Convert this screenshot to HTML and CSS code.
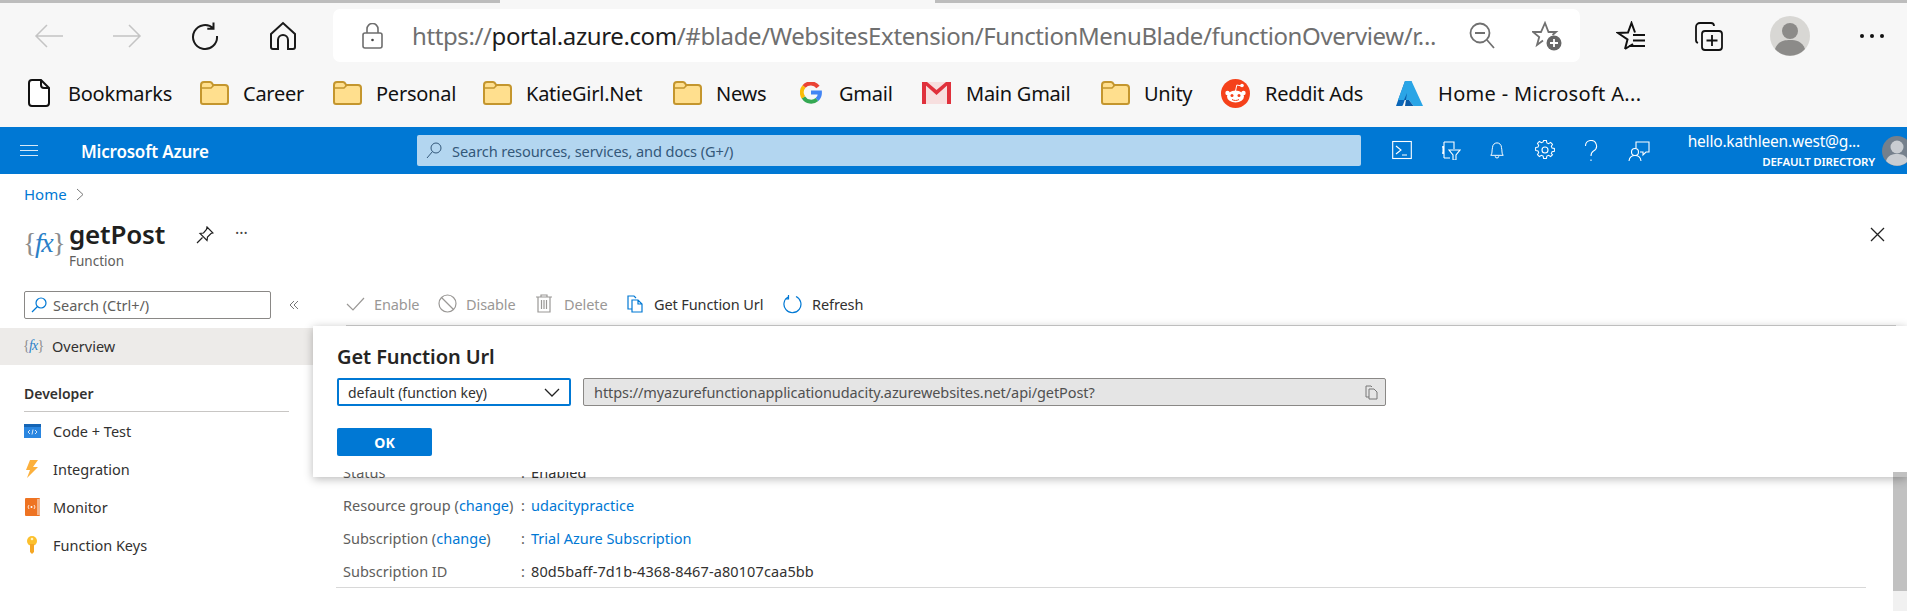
FILE: index.html
```html
<!DOCTYPE html>
<html lang="en">
<head>
<meta charset="utf-8">
<title>getPost - Microsoft Azure</title>
<link rel="stylesheet" href="styles.css">
</head>
<body>
<div class="topstrip"><span class="strip-a"></span><span class="strip-b"></span></div>
<div class="toolbar">
  <div class="navslot"><svg width="30" height="26" viewBox="0 0 30 26" class="ic-light"><path d="M29 13H2M13 2 2 13l11 11"/></svg></div>
  <div class="navslot"><svg width="30" height="26" viewBox="0 0 30 26" class="ic-light"><path d="M1 13h27M17 2l11 11-11 11"/></svg></div>
  <div class="navslot"><svg width="30" height="30" viewBox="0 0 30 30" class="ic-dark"><path d="M23.5 7.5A12 12 0 1 0 27 15M23.5 1.5v6.2h-6.2"/></svg></div>
  <div class="navslot"><svg width="28" height="30" viewBox="0 0 28 30" class="ic-dark"><path d="M2 13 14 2l12 11v13a2 2 0 0 1-2 2h-5V19a5 5 0 0 0-10 0v9H4a2 2 0 0 1-2-2z"/></svg></div>
  <div class="urlbar">
    <svg class="lock" width="21" height="26" viewBox="0 0 21 26"><path d="M5 10V6a5.500 5.500 0 0 1 11 0v4M3 10h15a2 2 0 0 1 2 2v11a2 2 0 0 1-2 2H3a2 2 0 0 1-2-2V12a2 2 0 0 1 2-2z"/><circle cx="10.500" cy="17" r="1.300" class="lock-dot"/></svg>
    <div class="url"><span class="url-dim">https://</span>portal.azure.com<span class="url-dim">/#blade/WebsitesExtension/FunctionMenuBlade/functionOverview/r...</span></div>
    <svg class="zoomic" width="26" height="28" viewBox="0 0 26 28"><circle cx="11" cy="11" r="9.500"/><path d="M6 11h10M18 18l7 8"/></svg>
    <svg class="starplus" width="30" height="30" viewBox="0 0 30 30"><path d="M11 19.500 5 24l2.200-8L1 11h8l4-9 3.500 9H24l-3.500 3"/><circle cx="22" cy="22" r="7.500" class="plus-bg"/><path d="M22 18v8M18 22h8" class="plus-mark"/></svg>
  </div>
  <svg class="favs" width="30" height="30" viewBox="0 0 30 30"><path d="M9 28l2.500-9.500L2 12l10-.5L15.500 2l3.500 9.500M17 14h12M17 19.500h12M13 25h16M9 28l8-5"/></svg>
  <svg class="colls" width="29" height="30" viewBox="0 0 29 30"><path d="M4 22a3 3 0 0 1-2-3V6a4 4 0 0 1 4-4h11a3 3 0 0 1 3 3"/><rect x="8" y="10" width="20" height="19" rx="3"/><path d="M18 14v11M12.500 19.500h11"/></svg>
  <svg class="avatar" width="40" height="40" viewBox="0 0 40 40"><circle cx="20" cy="20" r="20"/><circle cx="20" cy="15" r="8"/><path d="M5 33c3-8 9-9 15-9s12 1 15 9a20 20 0 0 1-30 0z"/></svg>
  <div class="dots"><i></i><i></i><i></i></div>
</div>
<div class="bookmarks">
  <div class="bm"><svg class="i-doc" width="22" height="28" viewBox="0 0 22 28"><path d="M4 1h9l8 8v15a3 3 0 0 1-3 3H4a3 3 0 0 1-3-3V4a3 3 0 0 1 3-3zM13 1v5a3 3 0 0 0 3 3h5" fill="#fff" stroke="#111" stroke-width="2"/></svg><span>Bookmarks</span></div>
  <div class="bm"><svg class="i-folder" width="29" height="26" viewBox="0 0 29 26"><use href="#folder"/></svg><span>Career</span></div>
  <div class="bm"><svg class="i-folder" width="29" height="26" viewBox="0 0 29 26"><use href="#folder"/></svg><span>Personal</span></div>
  <div class="bm"><svg class="i-folder" width="29" height="26" viewBox="0 0 29 26"><use href="#folder"/></svg><span>KatieGirl.Net</span></div>
  <div class="bm"><svg class="i-folder" width="29" height="26" viewBox="0 0 29 26"><use href="#folder"/></svg><span>News</span></div>
  <div class="bm"><svg class="i-g" width="22" height="22" viewBox="0 0 22 22"><g fill="none" stroke-width="4"><path d="M18 5a9 9 0 0 0-14-.5" stroke="#ea4335"/><path d="M4 4.500a9 9 0 0 0-.5 11" stroke="#fbbc05"/><path d="M3.500 15.500a9 9 0 0 0 13.500 2" stroke="#34a853"/><path d="M17 17.500a9 9 0 0 0 2.900-7H11" stroke="#4285f4"/></g></svg><span>Gmail</span></div>
  <div class="bm"><svg class="i-m" width="29" height="24" viewBox="0 0 29 24"><rect x="0" y="1" width="29" height="22" fill="#f7dfdf"/><path d="M0 1h4v22H0zM25 1h4v22h-4z" fill="#e0313c"/><path d="M0 1h5l9.500 8L24 1h5L14.500 14z" fill="#e0313c"/></svg><span>Main Gmail</span></div>
  <div class="bm"><svg class="i-folder" width="29" height="26" viewBox="0 0 29 26"><use href="#folder"/></svg><span>Unity</span></div>
  <div class="bm"><svg class="i-m" width="29" height="29" viewBox="0 0 29 29"><circle cx="14.500" cy="14.500" r="14.500" fill="#f5411a"/><ellipse cx="14.500" cy="17.500" rx="8.500" ry="6" fill="#fff"/><circle cx="6.500" cy="14" r="2.200" fill="#fff"/><circle cx="22.500" cy="14" r="2.200" fill="#fff"/><circle cx="21" cy="6.500" r="1.800" fill="#fff"/><path d="M14.500 12l1.300-6 5 1" fill="none" stroke="#fff" stroke-width="1"/><circle cx="11" cy="16.500" r="1.500" fill="#f5411a"/><circle cx="18" cy="16.500" r="1.500" fill="#f5411a"/><path d="M11 20.500c2 1.300 5 1.300 7 0" fill="none" stroke="#f5411a" stroke-width="1"/></svg><span>Reddit Ads</span></div>
  <div class="bm bm-wide"><svg class="i-m" width="27" height="27" viewBox="0 0 27 27"><path d="M9 1h6.500L7 25a1.500 1.500 0 0 1-1.500 1H0z" fill="#0a66b8"/><path d="M15.500 1H9L2 20h11l4.500 6H27z" fill="#2aa5e6"/><path d="M11 13l-3 7 5 0 4.500 6H9z" fill="#0b5aa6"/></svg><span>Home - Microsoft A...</span></div>
</div>
<svg class="defs" width="0" height="0"><defs><g id="folder"><path d="M1 5a3 3 0 0 1 3-3h6a3 3 0 0 1 2.500 2l.5 1h12a3 3 0 0 1 3 3v14a2 2 0 0 1-2 2H3a2 2 0 0 1-2-2z" fill="#ffdf8e" stroke="#c4962e" stroke-width="2"/><path d="M1 8h10l3-3" fill="none" stroke="#c4962e" stroke-width="1.500"/></g></defs></svg>

<header class="azbar">
  <div class="burger"><i></i><i></i><i></i></div>
  <div class="brand">Microsoft Azure</div>
  <div class="azsearch"><svg width="16" height="17" viewBox="0 0 16 17" class="s-ic"><circle cx="10" cy="6" r="5"/><path d="M6.500 9.500 1 16"/></svg><span>Search resources, services, and docs (G+/)</span></div>
  <div class="azicons">
    <div class="azicon az-shell"><svg width="20" height="20" viewBox="0 0 20 20"><rect x=".7" y="1.500" width="18.600" height="17"/><path d="M4 6l5 4-5 4M10 15h5"/></svg></div>
    <div class="azicon az-dir"><svg width="20" height="20" viewBox="0 0 20 20"><path d="M2 6v8M1 7h2M1 13h2M3 2h10v7M3 18h6M3 2v16M8 10h11l-4 5v5h-3v-5z"/></svg></div>
    <div class="azicon az-bell"><svg width="16" height="20" viewBox="0 0 18 20"><path d="M2 16c2-2 1-5 2-9a5 5 0 0 1 10 0c1 4 0 7 2 9zM7 17a2 2 0 0 0 4 0"/></svg></div>
    <div class="azicon az-gear"><svg width="20" height="20" viewBox="0 0 20 20"><circle cx="10" cy="10" r="3"/><path d="M8.500 1h3l.5 2.500 1.800.8L16 3l2 2-1.300 2.200.8 1.800 2.500.5v3l-2.500.5-.8 1.800L18 16l-2 2-2.200-1.300-1.800.8-.5 2.500h-3l-.5-2.500-1.800-.8L4 18l-2-2 1.300-2.200-.8-1.800L0 11.500v-3l2.500-.5.800-1.800L2 4l2-2 2.200 1.300 1.800-.8z" transform="translate(.6 -.4) scale(.94)"/></svg></div>
    <div class="azicon az-help"><svg width="14" height="22" viewBox="0 0 14 22"><path d="M1.500 6a5.500 5.500 0 1 1 8 4.900C7.500 12 7 13 7 16"/><path d="M7 19.500v1.500"/></svg></div>
    <div class="azicon az-feedback"><svg width="22" height="22" viewBox="0 0 22 22"><path d="M8 8V2h13v10h-3l-3 3v-3h-3"/><circle cx="7" cy="12" r="3.500"/><path d="M1 21c.5-4 3-5.500 6-5.500s5.500 1.500 6 5.500"/></svg></div>
  </div>
  <div class="acct"><div class="acct-mail">hello.kathleen.west@g...</div><div class="acct-dir">DEFAULT DIRECTORY</div></div>
  <svg class="azavatar" width="30" height="30" viewBox="0 0 30 30"><circle cx="15" cy="15" r="15" fill="#75808c"/><circle cx="15" cy="11" r="6.500" fill="#c9cdd2"/><path d="M4 25c2-6 6-7 11-7s9 1 11 7a15 15 0 0 1-22 0z" fill="#c9cdd2"/></svg>
</header>

<div class="blade">
  <nav class="crumb"><a>Home</a><svg width="8" height="13" viewBox="0 0 8 13" class="chev"><path d="M1 1l6 5.500L1 12"/></svg></nav>
  <div class="titlerow">
    <div class="fx fx-lg"><span class="br">{</span><span class="fn">fx</span><span class="br">}</span></div>
    <div class="titles"><h1>getPost</h1><div class="subtitle">Function</div></div>
    <svg class="pin" width="18" height="18" viewBox="0 0 18 18"><path d="M11 1l6 6-2 .5-3.500 3.500-.5 3.500L4 7.500l3.500-.5L10.500 3.500zM6.500 11.500 1 17"/></svg>
    <div class="more">···</div>
    <svg class="close" width="15" height="15" viewBox="0 0 15 15"><path d="M1 1l13 13M14 1 1 14"/></svg>
  </div>
  <div class="panes">
    <aside class="side">
      <div class="side-top">
        <div class="sidesearch"><svg width="16" height="16" viewBox="0 0 16 16" class="blue-ic"><circle cx="10" cy="6" r="5"/><path d="M6.500 9.500 1 15"/></svg><span>Search (Ctrl+/)</span></div>
        <svg class="collapse" width="10" height="10" viewBox="0 0 10 10"><path d="M5 1 1 5l4 4M9 1 5 5l4 4"/></svg>
      </div>
      <div class="menu-item active"><div class="fx fx-sm"><span class="br">{</span><span class="fn">fx</span><span class="br">}</span></div><span>Overview</span></div>
      <div class="menu-head">Developer</div>
      <div class="menu-item"><svg width="17" height="14" viewBox="0 0 17 14"><rect width="17" height="14" fill="#2a86e0"/><rect width="17" height="3" fill="#1565b5"/><path d="M6 6 4 8l2 2M11 6l2 2-2 2M9 5.500 8 10.500" fill="none" stroke="#fff" stroke-width=".8"/></svg><span>Code + Test</span></div>
      <div class="menu-item"><svg width="17" height="18" viewBox="0 0 17 18"><path d="M6 0h8L9 7h5L3 18l3-8H2z" fill="#fcb03c"/></svg><span>Integration</span></div>
      <div class="menu-item"><svg width="17" height="18" viewBox="0 0 17 18"><rect x="1" y="0" width="15" height="18" rx="1" fill="#ee7322"/><rect x="13" y="1" width="3" height="16" fill="#f4b48a"/><path d="M5 7 4 9l1 2M10 7l1 2-1 2" fill="none" stroke="#fff" stroke-width=".8"/><circle cx="7.500" cy="9" r="1" fill="#fff"/></svg><span>Monitor</span></div>
      <div class="menu-item"><svg width="17" height="18" viewBox="0 0 17 18"><circle cx="8" cy="5" r="5" fill="#fcc02d"/><path d="M6 8h4v8l-2 2-2-2z" fill="#f5a623"/><circle cx="8" cy="3" r="1.300" fill="#fff3c4"/></svg><span>Function Keys</span></div>
    </aside>
    <main class="main">
      <div class="cmdbar">
        <div class="cmd off cmd-enable"><svg width="19" height="16" viewBox="0 0 19 16" class="gray-ic"><path d="M1 8l6 6L18 2"/></svg><span>Enable</span></div>
        <div class="cmd off cmd-disable"><svg width="19" height="19" viewBox="0 0 19 19" class="gray-ic"><circle cx="9.500" cy="9.500" r="8.500"/><path d="M3.500 3.500l12 12"/></svg><span>Disable</span></div>
        <div class="cmd off cmd-delete"><svg width="16" height="19" viewBox="0 0 16 19" class="gray-ic"><path d="M0 3h16M5 3V1h6v2M2 3v15h12V3M5.500 6v9M8 6v9M10.500 6v9"/></svg><span>Delete</span></div>
        <div class="cmd cmd-url"><svg width="16" height="18" viewBox="0 0 16 18" class="blue-ic"><path d="M5 14H1V1h6l2 2M5 5h6l4 4v8H5zM11 5v4h4"/></svg><span>Get Function Url</span></div>
        <div class="cmd"><svg width="20" height="20" viewBox="0 0 20 20" class="blue-ic refresh"><path d="M13 2.500A8.500 8.500 0 1 1 5.500 2.700M5.500 1v4H2"/></svg><span>Refresh</span></div>
      </div>
      <div class="detail">
        <div class="essentials">
          <div class="kv"><span class="k">Status</span><span class="c">:</span><span class="v">Enabled</span></div>
          <div class="kv"><span class="k">Resource group (<a>change</a>)</span><span class="c">:</span><a class="v">udacitypractice</a></div>
          <div class="kv"><span class="k">Subscription (<a>change</a>)</span><span class="c">:</span><a class="v">Trial Azure Subscription</a></div>
          <div class="kv"><span class="k">Subscription ID</span><span class="c">:</span><span class="v">80d5baff-7d1b-4368-8467-a80107caa5bb</span></div>
        </div>
        <div class="scrollbar"><div class="thumb"></div></div>
      </div>
      <section class="dialog">
        <h2>Get Function Url</h2>
        <div class="dlg-row">
          <div class="select"><span>default (function key)</span><svg width="16" height="9" viewBox="0 0 16 9"><path d="M1 1l7 7 7-7"/></svg></div>
          <div class="urlfield"><span>https://myazurefunctionapplicationudacity.azurewebsites.net/api/getPost?</span><svg width="13" height="15" viewBox="0 0 13 15" class="copy"><path d="M4 12H1V1h5l1 1M4 4h5l3 3v7H4z"/></svg></div>
        </div>
        <button class="ok">OK</button>
      </section>
    </main>
  </div>
</div>
</body>
</html>
```
FILE: styles.css
```css
* { box-sizing: border-box; }
html, body { margin: 0; height: 611px; overflow: hidden; background: #fff; }
body { font-family: "Noto Sans", "Open Sans", sans-serif; color: #323130; font-size: 14px; }
svg { flex: none; display: block; }
.defs { position: absolute; }

.topstrip { display: flex; height: 3px; background: #f7f7f7; }
.strip-a { width: 500px; background: #bdbdbd; }
.strip-b { margin-left: 435px; flex: 1; background: #bdbdbd; }

.toolbar { display: flex; align-items: center; height: 62px; padding: 6px 0 3px 10px; background: #f7f7f7; }
.navslot { width: 78px; flex: none; display: flex; justify-content: center; }
.toolbar svg path, .toolbar svg rect, .toolbar svg circle { fill: none; }
.ic-light path { stroke: #c4c4c4; stroke-width: 1.5; }
.ic-dark path { stroke: #1a1a1a; stroke-width: 2; }
.urlbar { margin-left: 11px; width: 1247px; flex: none; height: 53px; background: #fff; border-radius: 7px; display: flex; align-items: center; padding-left: 29px; }
.lock path { stroke: #6e6e6e; stroke-width: 1.6; }
.toolbar .lock .lock-dot { fill: #444; }
.url { width: 1024px; flex: none; margin-left: 29px; padding-bottom: 1px; font-size: 24px; letter-spacing: -.39px; color: #1c1c1c; white-space: nowrap; overflow: hidden; }
.url-dim { color: #6f6f6f; }
.zoomic { margin-left: 33px; }
.zoomic circle, .zoomic path { stroke: #707070; stroke-width: 1.8; }
.starplus { margin-left: 37px; }
.starplus path { stroke: #707070; stroke-width: 1.8; }
.toolbar .starplus .plus-bg { fill: #666; }
.starplus .plus-mark { stroke: #fff; }
.favs { margin-left: 36px; }
.favs path { stroke: #111; stroke-width: 2; }
.colls { margin-left: 48px; }
.colls path, .colls rect { stroke: #111; stroke-width: 1.800; }
.avatar { margin-left: 47px; }
.toolbar .avatar circle { fill: #d8d7d4; }
.toolbar .avatar circle + circle, .toolbar .avatar path { fill: #8c8b89; }
.dots { margin-left: 50px; display: flex; gap: 6px; }
.dots i { width: 4px; height: 4px; border-radius: 50%; background: #111; }

.bookmarks { height: 62px; padding: 0 0 6px 28px; background: #f7f7f7; display: grid; align-items: center;
  grid-template-columns: 172px 133px 150px 190px 127px 122px 179px 120px 175px auto; }
.bm { display: flex; align-items: center; font-size: 20px; letter-spacing: -.25px; color: #111; white-space: nowrap; }
.bm-wide { letter-spacing: .33px; }
.i-doc { margin-right: 18px; }
.i-folder { margin-right: 14px; }
.i-g { margin-right: 17px; }
.i-m { margin-right: 15px; }

.azbar { height: 47px; background: #0078d4; display: flex; align-items: center; padding-left: 20px; overflow: hidden; color: #fff; }
.burger { width: 18px; flex: none; margin-right: 43px; display: flex; flex-direction: column; gap: 4px; }
.burger i { height: 1px; background: #d7e9f7; }
.brand { width: 336px; flex: none; font-size: 17px; font-weight: 600; letter-spacing: -.2px; white-space: nowrap; padding-top: 1px; }
.azsearch { width: 944px; flex: none; height: 31px; background: #b3d6f0; border-radius: 2px; display: flex; align-items: center; padding-left: 9px; gap: 10px; color: #33587a; font-size: 14.600px; white-space: nowrap; letter-spacing: -.1px; }
.s-ic circle, .s-ic path { fill: none; stroke: #33587a; stroke-width: 1; }
.azicons { margin-left: 31px; flex: none; display: flex; width: 291px; }
.azicon { display: flex; justify-content: flex-start; }
.az-shell { width: 49px; }
.az-dir { width: 48px; }
.az-bell { width: 46px; }
.az-gear { width: 49px; }
.az-help { width: 44px; }
.az-feedback { width: 55px; }
.azicon svg path, .azicon svg rect, .azicon svg circle { fill: none; stroke: #fff; stroke-width: 1.100; }
.acct { width: 192px; flex: none; display: flex; flex-direction: column; align-items: flex-end; white-space: nowrap; line-height: 1; }
.acct-mail { font-size: 15.500px; margin-right: 15px; letter-spacing: -.2px; }
.acct-dir { font-size: 11.500px; font-weight: 600; margin-top: 6px; letter-spacing: -.2px; }
.azavatar { margin-left: 7px; }

.blade { height: 437px; }
.crumb { height: 31px; padding: 9px 0 0 24px; display: flex; align-items: center; gap: 9px; color: #0078d4; font-size: 15px; line-height: 22px; }
.chev path { fill: none; stroke: #777; stroke-width: 1; }
.titlerow { height: 78px; padding: 12px 22px 0 24px; display: flex; align-items: flex-start; }
.fx { display: flex; align-items: center; font-family: "Liberation Serif", serif; font-style: italic; }
.fx .br { color: #8c8c8c; font-style: normal; font-weight: 400; }
.fx .fn { color: #2a80c8; }
.fx-lg { width: 45px; height: 30px; margin: 11px 0 0 -1px; font-size: 28px; letter-spacing: -1.5px; }
.fx-sm { width: 29px; margin-left: -1px; font-size: 14px; letter-spacing: -.8px; }
.titles { width: 127px; margin-left: 1px; }
h1 { margin: -1px 0 0; font-size: 26px; line-height: 36px; font-weight: 600; color: #201f1e; letter-spacing: -.2px; }
.subtitle { font-size: 13.500px; line-height: 18px; color: #605e5c; }
.pin { margin-top: 9px; }
.pin path { fill: none; stroke: #222; stroke-width: 1.200; }
.more { margin: 3px 0 0 21px; font-size: 16px; line-height: 26px; color: #444; }
.close { margin: 10px 0 0 auto; }
.close path { stroke: #222; stroke-width: 1.300; fill: none; }

.panes { display: flex; height: 328px; }
.side { width: 313px; flex: none; padding-top: 8px; }
.side-top { display: flex; align-items: center; gap: 18px; padding-left: 24px; margin-bottom: 9px; }
.sidesearch { width: 247px; height: 28px; border: 1px solid #8a8886; border-radius: 2px; display: flex; align-items: center; padding: 0 0 1px 6px; gap: 6px; color: #605e5c; font-size: 14.500px; }
.blue-ic path, .blue-ic circle { fill: none; stroke: #0078d4; stroke-width: 1.200; }
.collapse path { fill: none; stroke: #777; stroke-width: 1; }
.menu-item { height: 38px; display: flex; align-items: center; padding-left: 24px; font-size: 14.500px; color: #323130; }
.menu-item > svg { margin-right: 12px; }
.menu-item.active { height: 37px; padding-bottom: 1px; background: #edebe9; }
.menu-head { margin: 19px 24px 0; padding-bottom: 7px; line-height: 20px; font-weight: 600; font-size: 14px; color: #323130; border-bottom: 1px solid #c8c6c4; }

.main { flex: 1; position: relative; min-width: 0; }
.cmdbar { height: 43px; margin-left: 33px; margin-right: 11px; padding-bottom: 1px; display: flex; align-items: center; border-bottom: 1px solid #cfcfcf; font-size: 14.500px; }
.cmd { display: flex; align-items: center; gap: 9px; white-space: nowrap; color: #323130; letter-spacing: -.1px; }
.cmd-enable { width: 92px; }
.cmd-disable { width: 98px; }
.cmd-delete { width: 91px; gap: 12px; }
.cmd-url { width: 156px; gap: 11px; }
.cmd.off { color: #9a9896; }
.gray-ic path, .gray-ic circle { fill: none; stroke: #9a9896; stroke-width: 1.200; }

.detail { display: flex; height: 285px; }
.essentials { flex: 1; height: 262px; margin: 0 27px 0 23px; padding: 129px 0 0 7px; border-bottom: 1px solid #d8d8d8; overflow: hidden; }
.kv { height: 33px; display: flex; align-items: center; font-size: 14.500px; color: #605e5c; white-space: nowrap; }
.k { width: 178px; }
.c { width: 10px; }
.v { color: #323130; letter-spacing: .1px; }
a { color: #0078d4; }
a.v { color: #0078d4; letter-spacing: 0; }
.scrollbar { width: 14px; background: #f1f1f1; }
.thumb { height: 265px; background: #c1c1c1; }

.dialog { position: absolute; top: 43px; left: 0; right: 0; height: 151px; padding: 19px 24px 0;
  background: linear-gradient(#fff 146px, transparent 146px);
  box-shadow: 0 2px 9px rgba(0, 0, 0, .28); }
h2 { margin: 0; font-size: 20px; line-height: 24px; font-weight: 600; color: #252423; letter-spacing: -.1px; }
.dlg-row { display: flex; gap: 12px; margin-top: 9px; }
.select { width: 234px; height: 28px; border: 2px solid #0078d4; border-radius: 2px; display: flex; align-items: center; justify-content: space-between; padding: 0 9px; font-size: 14px; color: #323130; white-space: nowrap; }
.select path { fill: none; stroke: #222; stroke-width: 1.300; }
.urlfield { width: 803px; height: 28px; background: #e5e5e5; border: 1px solid #8a8886; border-radius: 2px; display: flex; align-items: center; justify-content: space-between; padding: 0 7px 0 10px; font-size: 14.500px; color: #505050; white-space: nowrap; letter-spacing: -.08px; }
.copy path { fill: none; stroke: #777; stroke-width: 1; }
.ok { display: block; margin-top: 22px; width: 95px; height: 28px; border: 0; border-radius: 2px; background: #0078d4; color: #fff; font-family: inherit; font-size: 14px; font-weight: 700; }
```
